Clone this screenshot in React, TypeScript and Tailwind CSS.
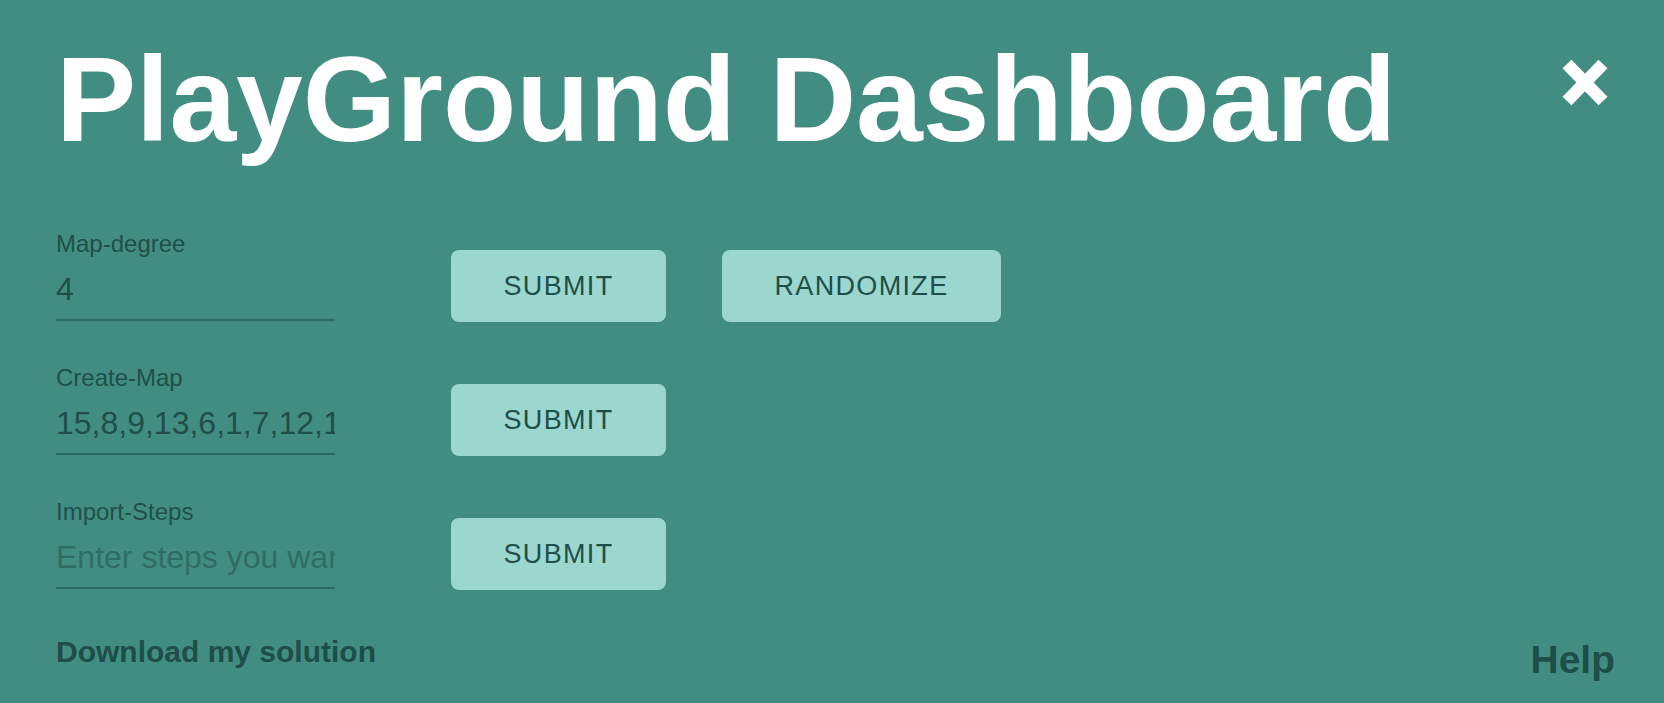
import React from "react";

function Field({
  label,
  value,
  placeholder,
}: {
  label: string;
  value?: string;
  placeholder?: string;
}) {
  return (
    <div className="w-[279px] flex flex-col">
      <label className="text-[24px] leading-[24px] text-[#1f5049] h-[24px]">{label}</label>
      <div className="mt-[13px] pb-[10px] border-b-2 border-[#2b6a61]">
        <input
          className="block w-full h-[40px] bg-transparent outline-none text-[32px] leading-[40px] text-[#1f4f49] placeholder:text-[#2f6d64] p-0"
          style={{ fontFamily: '"Liberation Sans", Arial, sans-serif' }}
          defaultValue={value}
          placeholder={placeholder}
        />
      </div>
    </div>
  );
}

function Btn({ children, w }: { children: React.ReactNode; w: string }) {
  return (
    <button
      className={`${w} h-[72px] rounded-[8px] bg-[#9bd7cf] text-[#1e4e48] text-[27px] tracking-[0.05em] flex items-center justify-center`}
    >
      {children}
    </button>
  );
}

export default function App() {
  return (
    <div
      className="min-h-screen w-full bg-[#428d81] px-[56px]"
      style={{ fontFamily: '"Liberation Sans", Arial, sans-serif' }}
    >
      <div className="flex justify-between items-start pt-[39px]">
        <h1 className="text-[120px] leading-none font-bold text-white">
          PlayGround Dashboard
        </h1>
        <button className="mt-[20px] w-[46px] h-[47px]" aria-label="close">
          <svg viewBox="0 0 46 47" width="46" height="47">
            <line x1="5" y1="5" x2="41" y2="42" stroke="white" strokeWidth="12.5" strokeLinecap="butt" />
            <line x1="41" y1="5" x2="5" y2="42" stroke="white" strokeWidth="12.5" strokeLinecap="butt" />
          </svg>
        </button>
      </div>

      <div className="mt-[73px] flex flex-col gap-[45px]">
        <div className="flex items-end">
          <Field label="Map-degree" value="4" />
          <div className="ml-[116px] flex gap-[56px] mb-[-1px]">
            <Btn w="w-[215px]">SUBMIT</Btn>
            <Btn w="w-[279px]">RANDOMIZE</Btn>
          </div>
        </div>
        <div className="flex items-end">
          <Field label="Create-Map" value="15,8,9,13,6,1,7,12,14,3,2,10,5,11,4,0" />
          <div className="ml-[116px] flex mb-[-1px]">
            <Btn w="w-[215px]">SUBMIT</Btn>
          </div>
        </div>
        <div className="flex items-end">
          <Field label="Import-Steps" placeholder="Enter steps you want to import" />
          <div className="ml-[116px] flex mb-[-1px]">
            <Btn w="w-[215px]">SUBMIT</Btn>
          </div>
        </div>
      </div>

      <div className="mt-[48px] flex justify-between items-start">
        <a className="text-[30px] leading-none font-bold text-[#1e4e48]">Download my solution</a>
        <a className="text-[39px] leading-none font-bold text-[#1e4e48] mt-[3px] -mr-[7px]">Help</a>
      </div>
    </div>
  );
}
